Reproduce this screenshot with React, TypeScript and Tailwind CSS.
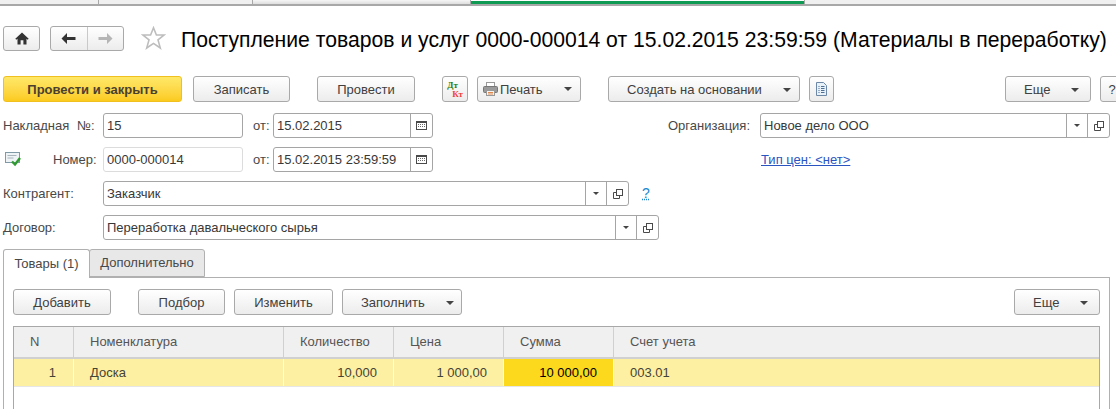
import React from 'react';

const btnClass =
  'flex shrink-0 items-center justify-center rounded-[3px] border border-[#a9a9a9] bg-gradient-to-b from-white to-[#ececec] text-[13px] text-[#404040]';

function Caret({ className = '' }: { className?: string }) {
  return <span className={`inline-block h-0 w-0 border-x-[4px] border-t-[4px] border-x-transparent border-t-[#444] ${className}`} />;
}

function Btn({ label, width, className = '' }: { label: string; width: string; className?: string }) {
  return <div className={`${btnClass} h-[26px] pt-[2px] ${width} ${className}`}>{label}</div>;
}

function MenuBtn({ label, width, className = '' }: { label: string; width: string; className?: string }) {
  return (
    <div className={`${btnClass} h-[26px] !justify-start pl-[18px] pt-[2px] ${width} ${className}`}>
      <span>{label}</span>
      <Caret className="ml-[21px] shrink-0" />
    </div>
  );
}

function CalendarIcon() {
  return (
    <svg width="11" height="9" viewBox="0 0 11 9">
      <rect x="0.5" y="0.5" width="10" height="8" fill="none" stroke="#4a4a4a" />
      <rect x="0" y="0" width="11" height="2" fill="#4a4a4a" />
      <path d="M2 3.5h1M4 3.5h1M6 3.5h1M8 3.5h1M2 5.5h1M4 5.5h1M6 5.5h1M8 5.5h1" stroke="#6a6a6a" />
    </svg>
  );
}

function OpenIcon() {
  return (
    <svg width="10" height="10" viewBox="0 0 10 10" fill="none" stroke="#4a4a4a">
      <rect x="3.5" y="0.5" width="6" height="6" />
      <path d="M3.5 3.5H0.5V9.5H6.5V6.5" />
    </svg>
  );
}

function Field({
  value,
  width,
  date,
  select,
  light,
  className = '',
}: {
  value: string;
  width: string;
  date?: boolean;
  select?: boolean;
  light?: boolean;
  className?: string;
}) {
  return (
    <div className={`flex h-[25px] ${width} shrink-0 items-stretch rounded-[3px] border ${light ? 'border-[#dcdcdc]' : 'border-[#a5a5a5]'} bg-white text-[13px] text-[#383838] ${className}`}>
      <div className="flex flex-1 items-center pl-[3px]">{value}</div>
      {date && (
        <div className="flex w-[22px] items-center justify-center border-l border-[#a5a5a5]">
          <CalendarIcon />
        </div>
      )}
      {select && (
        <>
          <div className="flex w-[21px] items-center justify-center border-l border-[#a5a5a5]">
            <span className="h-0 w-0 border-x-[3px] border-t-[3px] border-x-transparent border-t-[#444]" />
          </div>
          <div className="flex w-[22px] items-center justify-center border-l border-[#a5a5a5]">
            <OpenIcon />
          </div>
        </>
      )}
    </div>
  );
}

const cols = [
  { title: 'N', value: '1', width: 'w-[60px]', pad: 'pl-[16px]', align: 'pr-[17px] text-right' },
  { title: 'Номенклатура', value: 'Доска', width: 'w-[210px]', pad: 'pl-[16px]', align: 'pl-[16px]' },
  { title: 'Количество', value: '10,000', width: 'w-[110px]', pad: 'pl-[16px]', align: 'pr-[16px] text-right' },
  { title: 'Цена', value: '1 000,00', width: 'w-[110px]', pad: 'pl-[16px]', align: 'pr-[16px] text-right' },
  { title: 'Сумма', value: '10 000,00', width: 'w-[110px]', pad: 'pl-[16px]', align: 'pr-[16px] text-right' },
  { title: 'Счет учета', value: '003.01', width: 'flex-1', pad: 'pl-[16px]', align: 'pl-[16px]' },
];

export default function App() {
  return (
    <div className="h-[409px] w-[1116px] overflow-hidden bg-white font-['Liberation_Sans',Arial,sans-serif]">
      {/* обрезанная полоса вкладок сверху */}
      <div className="flex h-[6px] border-b-2 border-[#a8a8a8] bg-[#f0f0f0]">
        <div className="w-[99px] border-r border-[#a8a8a8]" />
        <div className="w-[154px] border-r border-[#a8a8a8]" />
        <div className="w-[218px] border-r border-[#a8a8a8] bg-gradient-to-b from-[#f6f6f6] to-[#dedede]" />
        <div className="w-[334px] border-r border-[#a8a8a8] bg-white">
          <div className="mt-px h-[3px] bg-[#0e9a52]" />
        </div>
        <div className="flex-1" />
      </div>

      {/* заголовок */}
      <div className="mt-[19px] flex h-[26px] items-center pl-[3px]">
        <div className={`${btnClass} h-[25px] w-[37px]`}>
          <svg width="14" height="13" viewBox="0 0 14 13" fill="#333">
            <path d="M7 0.5L0.3 6.8L1.3 7.8L2.5 6.8V12.5H5.6V8.3H8.4V12.5H11.5V6.8L12.7 7.8L13.7 6.8Z" />
          </svg>
        </div>
        <div className={`${btnClass} ml-[10px] h-[25px] w-[74px]`}>
          <div className="flex h-full flex-1 items-center justify-center border-r border-[#c9c9c9]">
            <svg width="15" height="11" viewBox="0 0 15 11" fill="#333">
              <path d="M6 0L0.5 5.5L6 11V7H14.5V4H6Z" />
            </svg>
          </div>
          <div className="flex h-full flex-1 items-center justify-center">
            <svg width="15" height="11" viewBox="0 0 15 11" fill="#b5b5b5">
              <path d="M9 0L14.5 5.5L9 11V7H0.5V4H9Z" />
            </svg>
          </div>
        </div>
        <svg className="ml-[17px] shrink-0" width="25" height="24" viewBox="0 0 25 24" fill="#fff" stroke="#bdbdbd" strokeWidth="1.6">
          <path d="M12.5 1.8L15.4 9H23L17 13.9L19.3 22L12.5 17.4L5.7 22L8 13.9L2 9H9.6Z" />
        </svg>
        <div className="ml-[15px] whitespace-nowrap pt-[3px] text-[21.17px] leading-[26px] text-black">
          Поступление товаров и услуг 0000-000014 от 15.02.2015 23:59:59 (Материалы в переработку)
        </div>
      </div>

      {/* командная панель */}
      <div className="mt-[25px] flex items-center pl-[3px]">
        <div className="flex h-[26px] w-[179px] shrink-0 items-center justify-center rounded-[3px] border border-[#f0c020] bg-gradient-to-b from-[#ffe867] to-[#fbcb1c] pt-[2px] text-[13px] font-bold text-[#4a4030]">
          Провести и закрыть
        </div>
        <Btn label="Записать" width="w-[97px]" className="ml-[11px]" />
        <Btn label="Провести" width="w-[98px]" className="ml-[27px]" />
        <div className={`${btnClass} ml-[27px] h-[26px] w-[26px] flex-col pt-px`}>
          <span className="-ml-[5px] font-['Liberation_Serif',serif] text-[9px] font-bold leading-[9px] text-[#2f7d00]">Дт</span>
          <span className="ml-[5px] font-['Liberation_Serif',serif] text-[9px] font-bold leading-[9px] text-[#f04040]">Кт</span>
        </div>
        <div className={`${btnClass} ml-[9px] h-[26px] w-[104px] !justify-start pl-[5px]`}>
          <svg className="shrink-0" width="15" height="14" viewBox="0 0 15 14">
            <rect x="3.5" y="0.5" width="8" height="5" fill="#fff" stroke="#999" />
            <rect x="0.5" y="4.5" width="14" height="6" rx="1" fill="#9a9a9a" stroke="#777" />
            <rect x="3.5" y="8.5" width="8" height="5" fill="#f4f4f4" stroke="#999" />
            <path d="M5 10.5h5M5 12h5" stroke="#e0894f" />
          </svg>
          <span className="ml-[2px] pt-[2px]">Печать</span>
          <Caret className="ml-[21px]" />
        </div>
        <MenuBtn label="Создать на основании" width="w-[192px]" className="ml-[27px]" />
        <div className={`${btnClass} ml-[9px] h-[26px] w-[25px]`}>
          <svg width="11" height="14" viewBox="0 0 11 14" fill="none">
            <path d="M0.5 0.5H7.5L10.5 3.5V13.5H0.5Z" fill="#e8f0f8" stroke="#6d87a6" />
            <path d="M2.5 4.5H3.5M5 4.5H8.5M2.5 6.5H3.5M5 6.5H8.5M2.5 8.5H3.5M5 8.5H8.5M2.5 10.5H3.5M5 10.5H8.5" stroke="#4d6f96" />
          </svg>
        </div>
        <MenuBtn label="Еще" width="w-[86px]" className="ml-[171px]" />
        <Btn label="?" width="w-[24px]" className="ml-[9px]" />
      </div>

      {/* реквизиты */}
      <div className="mt-[11px] flex h-[25px] items-center pl-[3px] text-[13px] text-[#484848]">
        <span className="w-[74px]">Накладная</span>
        <span className="w-[26px]">№:</span>
        <Field value="15" width="w-[140px]" />
        <span className="ml-[10px] w-[20px]">от:</span>
        <Field value="15.02.2015" width="w-[160px]" date />
        <span className="w-[317px] text-right">Организация:</span>
        <Field value="Новое дело ООО" width="w-[350px]" select className="ml-[10px]" />
      </div>
      <div className="mt-[9px] flex h-[25px] items-center pl-[5px] text-[13px] text-[#484848]">
        <svg className="shrink-0" width="16" height="15" viewBox="0 0 16 15">
          <rect x="0.5" y="0.5" width="14" height="10" fill="#eef3f6" stroke="#7f9aa6" />
          <path d="M2.5 3.5h9M2.5 6h6" stroke="#a8b4ba" />
          <path d="M7 9.5L10 12.5L15 6" fill="none" stroke="#2f9a2f" strokeWidth="2.4" />
        </svg>
        <span className="ml-[32px] w-[50px]">Номер:</span>
        <Field value="0000-000014" width="w-[140px]" light />
        <span className="ml-[10px] w-[20px]">от:</span>
        <Field value="15.02.2015 23:59:59" width="w-[160px]" date />
        <span className="ml-[328px] text-[#2a55c0] underline">Тип цен: &lt;нет&gt;</span>
      </div>
      <div className="mt-[9px] flex h-[25px] items-center pl-[3px] text-[13px] text-[#484848]">
        <span className="w-[100px]">Контрагент:</span>
        <Field value="Заказчик" width="w-[526px]" select />
        <span className="ml-[13px] text-[14px] text-[#1b86cf] underline decoration-dotted">?</span>
      </div>
      <div className="mt-[9px] flex h-[25px] items-center pl-[3px] text-[13px] text-[#484848]">
        <span className="w-[100px]">Договор:</span>
        <Field value="Переработка давальческого сырья" width="w-[556px]" select />
      </div>

      {/* вкладки */}
      <div className="mt-[9px] flex h-[29px] pl-[3px] text-[13px] text-[#484848]">
        <div className="relative z-10 flex h-[29px] w-[87px] items-center justify-center rounded-t-[3px] border border-b-0 border-[#b0b0b0] bg-white">
          Товары (1)
        </div>
        <div className="-ml-px flex h-[28px] w-[116px] items-center justify-center rounded-t-[3px] border border-[#b0b0b0] bg-[#e8e8e8]">
          Дополнительно
        </div>
      </div>
      <div className="-mt-px ml-[3px] h-[133px] w-[1107px] border border-b-0 border-[#b0b0b0] bg-white px-[9px] pt-[11px]">
        <div className="flex items-center">
          <Btn label="Добавить" width="w-[98px]" />
          <Btn label="Подбор" width="w-[87px]" className="ml-[27px]" />
          <Btn label="Изменить" width="w-[99px]" className="ml-[9px]" />
          <MenuBtn label="Заполнить" width="w-[120px]" className="ml-[9px]" />
          <MenuBtn label="Еще" width="w-[86px]" className="ml-auto" />
        </div>
        {/* табличная часть */}
        <div className="mt-[11px] h-[90px] w-[1087px] border border-b-0 border-[#a8a8a8] text-[13px]">
          <div className="flex h-[32px] border-b-2 border-[#d0d0d0] bg-[#f0f0f0] text-[#555]">
            {cols.map(c => (
              <div key={c.title} className={`flex ${c.width} items-center border-r border-[#d0d0d0] ${c.pad} last:border-r-0`}>
                {c.title}
              </div>
            ))}
          </div>
          <div className="flex h-[28px] border-b border-[#e6e6e6] bg-[#fdf0a3] text-[#444436]">
            {cols.map(c => (
              <div
                key={c.title}
                className={`${c.width} border-r border-white leading-[27px] ${c.align} ${c.title === 'Сумма' ? 'bg-[#fcd91c] text-black' : ''} last:border-r-0`}
              >
                {c.value}
              </div>
            ))}
          </div>
        </div>
      </div>
    </div>
  );
}
